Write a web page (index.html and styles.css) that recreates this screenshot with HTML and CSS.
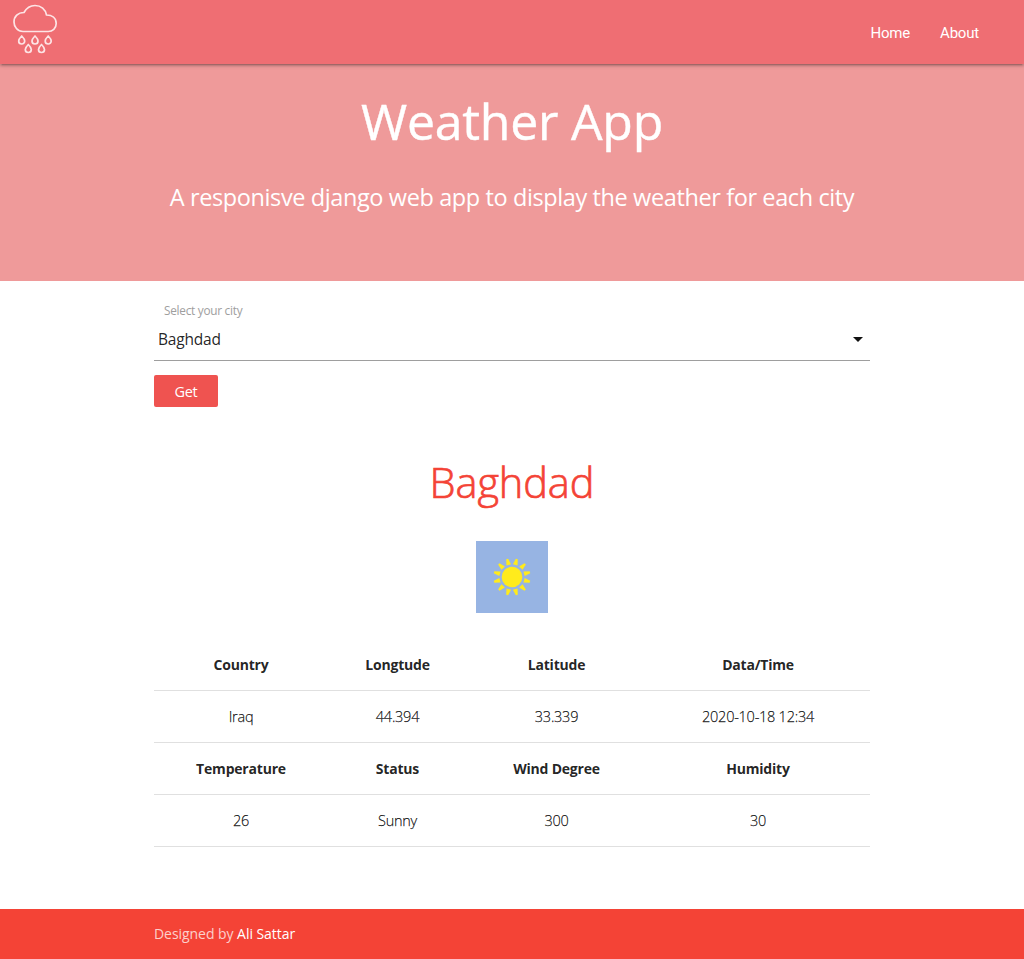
FILE: index.html
```html
<!DOCTYPE html>
<html lang="en">
<head>
<meta charset="utf-8">
<title>Weather App</title>
<link rel="stylesheet" href="styles.css">
</head>
<body>
<nav class="navbar">
  <a class="brand" href="#" aria-label="Weather App home">
    <svg class="logo" viewBox="0 0 48 52" width="48" height="52">
      <path d="M11 29.500C5.500 29.500 2 24.800 2 20c0-5.500 4-9.500 10-9.500C14.500 6 18.500 3.500 23 3.500c6 0 10.500 4 11.500 9.500C40 13 44.200 16 44.200 21.500c0 5-3.700 8-8 8z"/>
      <path d="M9.700 34c-2 2-3 3.700-3 5a3 3 0 0 0 6 0c0-1.300-1-3-3-5z"/>
      <path d="M23 34c-2 2-3 3.700-3 5a3 3 0 0 0 6 0c0-1.300-1-3-3-5z"/>
      <path d="M36.200 34c-2 2-3 3.700-3 5a3 3 0 0 0 6 0c0-1.300-1-3-3-5z"/>
      <path d="M16.300 42.500c-2 2-3 3.700-3 5a3 3 0 0 0 6 0c0-1.300-1-3-3-5z"/>
      <path d="M29.500 42.500c-2 2-3 3.700-3 5a3 3 0 0 0 6 0c0-1.300-1-3-3-5z"/>
    </svg>
  </a>
  <div class="links">
    <a href="#">Home</a>
    <a href="#">About</a>
  </div>
</nav>
<header class="hero">
  <h1>Weather App</h1>
  <p>A responisve django web app to display the weather for each city</p>
</header>
<main class="container">
  <form class="city-form">
    <label>Select your city</label>
    <div class="select">
      <span>Baghdad</span>
      <svg width="10" height="5" viewBox="0 0 10 5"><path d="M0 0h10L5 5z" fill="#111"/></svg>
    </div>
    <button type="button">Get</button>
  </form>
  <h2>Baghdad</h2>
  <div class="weather">
    <svg width="72" height="72" viewBox="-36 -36 72 72">
      <defs><path id="ray" d="M-2.400-12.500L-1-18.600H1L2.400-12.500z"/></defs>
      <g fill="#ffeb1c">
        <circle r="10.300"/>
        <use href="#ray" transform="rotate(15)"/>
        <use href="#ray" transform="rotate(45)"/>
        <use href="#ray" transform="rotate(75)"/>
        <use href="#ray" transform="rotate(105)"/>
        <use href="#ray" transform="rotate(135)"/>
        <use href="#ray" transform="rotate(165)"/>
        <use href="#ray" transform="rotate(195)"/>
        <use href="#ray" transform="rotate(225)"/>
        <use href="#ray" transform="rotate(255)"/>
        <use href="#ray" transform="rotate(285)"/>
        <use href="#ray" transform="rotate(315)"/>
        <use href="#ray" transform="rotate(345)"/>
      </g>
    </svg>
  </div>
  <table>
    <colgroup><col class="c1"><col class="c2"><col class="c3"><col class="c4"></colgroup>
    <tr><th>Country</th><th>Longtude</th><th>Latitude</th><th>Data/Time</th></tr>
    <tr><td>Iraq</td><td>44.394</td><td>33.339</td><td>2020-10-18 12:34</td></tr>
    <tr><th>Temperature</th><th>Status</th><th>Wind Degree</th><th>Humidity</th></tr>
    <tr><td>26</td><td>Sunny</td><td>300</td><td>30</td></tr>
  </table>
</main>
<footer class="footer">
  <div class="container">Designed by <a href="#">Ali Sattar</a></div>
</footer>
</body>
</html>
```
FILE: styles.css
```css
* { box-sizing: border-box; }
body {
  margin: 0;
  min-height: 959px;
  display: flex;
  flex-direction: column;
  background: #fff;
  color: rgba(0, 0, 0, 0.87);
  font-family: "Open Sans", "Noto Sans", sans-serif;
  font-size: 14.500px;
}
a { color: inherit; text-decoration: none; }
h1, h2, p { margin: 0; font-weight: 400; }
.navbar {
  position: relative;
  height: 64px;
  flex: none;
  display: flex;
  justify-content: space-between;
  background: #ef6e73;
  box-shadow: 0 2px 2px 0 rgba(0,0,0,.14), 0 3px 1px -2px rgba(0,0,0,.12), 0 1px 5px 0 rgba(0,0,0,.2);
  color: #fff;
}
.brand { padding: 2px 0 0 12px; }
.logo { display: block; fill: none; stroke: #fde4e5; stroke-width: 1.700; stroke-linejoin: round; }
.links {
  display: flex;
  gap: 30px;
  padding-right: 45px;
  font-family: Roboto, sans-serif;
  font-size: 15px;
  line-height: 66px;
  letter-spacing: -0.200px;
}
.hero {
  height: 217px;
  flex: none;
  background: #ef9a9a;
  color: #fff;
  text-align: center;
}
.hero h1 { padding-top: 25px; font-size: 50px; line-height: 64px; letter-spacing: -0.250px; -webkit-text-stroke: 0.400px; }
.hero p { padding-top: 28px; font-size: 23.500px; line-height: 32px; letter-spacing: -0.390px; }
.container { width: 716px; margin: 0 auto; }
main.container { flex: 1; }
.city-form { padding-top: 21px; }
.city-form label { display: block; padding-left: 10px; font-size: 11.800px; line-height: 16px; color: #9e9e9e; letter-spacing: -0.260px; }
.select {
  height: 43px;
  display: flex;
  align-items: center;
  justify-content: space-between;
  padding: 0 7px 0 4px;
  border-bottom: 1px solid #9e9e9e;
  font-size: 15.500px;
  line-height: 20px;
  letter-spacing: -0.200px;
}
.city-form button {
  display: block;
  width: 64px;
  height: 32px;
  margin-top: 14px;
  padding: 0;
  border: 0;
  border-radius: 2px;
  background: #ef5350;
  color: #fff;
  font-family: inherit;
  font-size: 14.500px;
  letter-spacing: -0.300px;
}
h2 { padding-top: 46px; font-size: 41.500px; font-weight: 300; line-height: 58px; letter-spacing: -0.100px; text-align: center; color: #f44336; -webkit-text-stroke: 0.700px; }
.weather { display: flex; justify-content: center; padding-top: 30px; }
.weather svg { background: #97b4e3; }
table { width: 716px; margin-top: 26px; table-layout: fixed; border-collapse: separate; border-spacing: 0; letter-spacing: -0.250px; }
.c1 { width: 174px; }
.c2 { width: 139px; }
.c3 { width: 179px; }
.c4 { width: 224px; }
th, td { height: 52px; padding: 0; border-bottom: 1px solid #e0e0e0; text-align: center; line-height: 22px; }
th { font-weight: 700; font-size: 14px; letter-spacing: -0.200px; }
td { font-weight: 300; font-size: 14.500px; -webkit-text-stroke: 0.250px; }
.footer { flex: none; height: 50px; background: #f44336; color: rgba(255,255,255,.75); line-height: 50px; font-size: 14px; letter-spacing: -0.050px; }
.footer a { color: #fff; }
```
